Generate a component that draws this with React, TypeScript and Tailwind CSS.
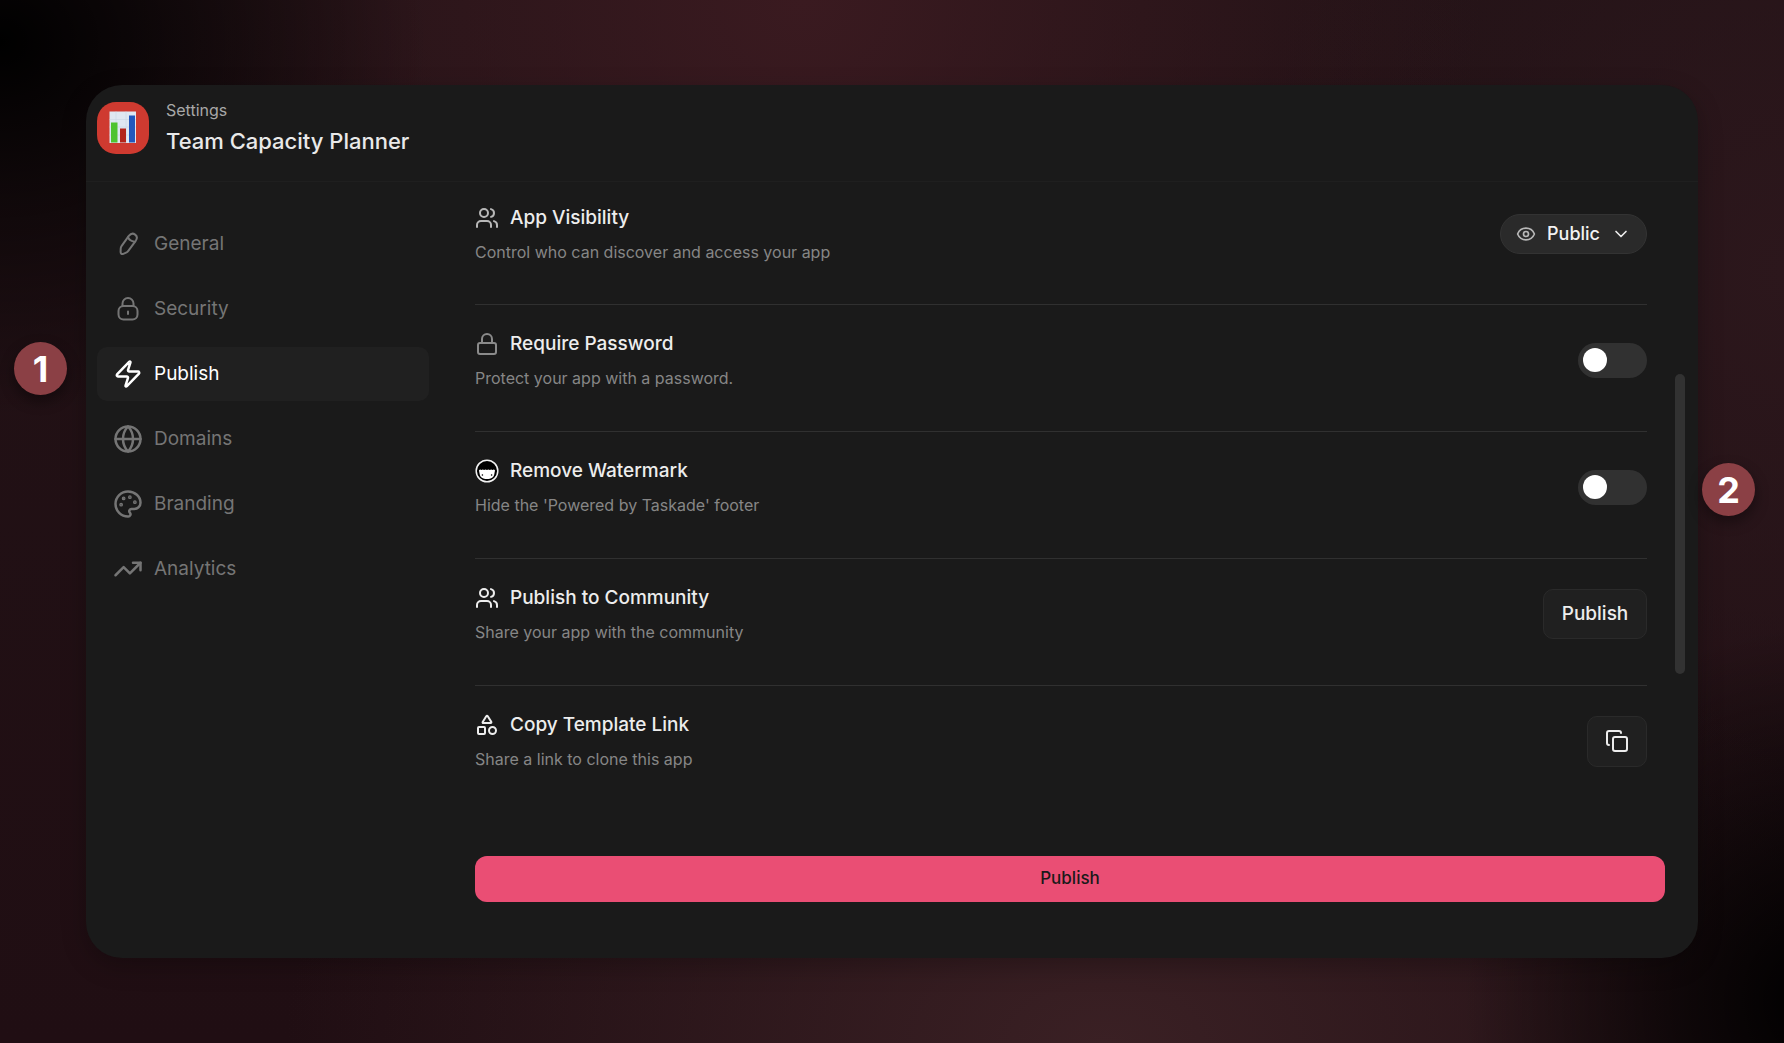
import { useState } from "react";
import type { ReactNode } from "react";
import { ChevronDown, Copy, Eye, Globe, Lock, Palette, Shapes, TrendingUp, Users, Zap } from "lucide-react";

function PencilIcon() {
  return (
    <svg viewBox="0 0 30 30" className="size-[30px]" fill="none" stroke="currentColor" strokeWidth="2" strokeLinecap="round" strokeLinejoin="round" aria-hidden="true">
      <path d="M15.800 6.900c1.900-2.300 4.400-2.700 6.300-1.300s2.200 3.900.6 6.200l-7.400 10.100c-.6.8-1.300 1.400-2.200 1.800l-2.800 1.200c-1.500.6-2.700-.2-2.700-1.800l.1-3.400c0-1.100.4-2 1-2.900z" />
      <path d="M15 8.200c1 2.600 3.300 4.200 6.600 4.500" />
    </svg>
  );
}

function RoundLockIcon() {
  return (
    <svg viewBox="0 0 30 30" className="size-[30px]" fill="none" stroke="currentColor" strokeWidth="2" strokeLinecap="round" strokeLinejoin="round" aria-hidden="true">
      <rect x="5.500" y="12" width="19" height="13.500" rx="5" />
      <path d="M9.500 12V9.500a5.500 5.500 0 0 1 11 0V12M15 17.500v2.500" />
    </svg>
  );
}

function FaceIcon() {
  return (
    <svg viewBox="0 0 24 24" className="size-6" aria-hidden="true">
      <circle cx="12" cy="12" r="10.800" fill="#000" stroke="#f2f2f2" strokeWidth="1.500" />
      <path d="M4 11.200c.8-.9 1.600-.9 2.400-.1.900-.9 1.800-.9 2.700 0 .9-.9 1.900-.9 2.900 0 .9-.9 1.900-.9 2.800 0 .9-.9 1.900-.9 2.800 0 .8-.8 1.600-.8 2.400.1-.1 1.200-.4 2-.6 3.500-.5 3.700-3.100 5.300-7.400 5.300s-6.900-1.600-7.400-5.300C4.400 13.200 4.100 12.400 4 11.200z" fill="#fff" />
      <circle cx="7.400" cy="16" r=".8" fill="#000" />
      <circle cx="16.600" cy="16" r=".8" fill="#000" />
    </svg>
  );
}

function AppLogo() {
  return (
    <svg viewBox="0 0 52 52" className="mt-1 size-[52px] shrink-0" aria-hidden="true">
      <rect width="52" height="52" rx="19" fill="#cf3a30" />
      <rect x="12.500" y="9.500" width="26.500" height="31.500" fill="#dfe7f1" />
      <path d="M12.500 17.500H39M12.500 25H39M12.500 33H39M19 9.500V41M29 9.500V41" stroke="#cbd6e4" strokeWidth=".6" />
      <rect x="14" y="20.500" width="6.500" height="20" fill="#4fc32f" />
      <rect x="23" y="26.500" width="6" height="14" fill="#b3241a" />
      <rect x="32" y="13.500" width="6" height="27" fill="#2258bd" />
    </svg>
  );
}

const navItems: { label: string; icon: ReactNode }[] = [
  { label: "General", icon: <PencilIcon /> },
  { label: "Security", icon: <RoundLockIcon /> },
  { label: "Publish", icon: <Zap size={30} /> },
  { label: "Domains", icon: <Globe size={30} /> },
  { label: "Branding", icon: <Palette size={30} /> },
  { label: "Analytics", icon: <TrendingUp size={30} /> },
];

function Row({ icon, title, text, first, last, children }: { icon: ReactNode; title: string; text: string; first?: boolean; last?: boolean; children: ReactNode }) {
  return (
    <section
      className={
        "mr-[18px] flex items-center justify-between " +
        (first ? "pt-[22px] " : "pt-[25px] ") +
        (last ? "" : first ? "border-b border-[#303030] pb-10" : "border-b border-[#303030] pb-[41px]")
      }
    >
      <div>
        <h2 className="flex h-7 items-center gap-[11px] text-[19px] leading-7 font-medium text-[#ededed]">
          {icon}
          {title}
        </h2>
        <p className="mt-2 text-base leading-6 text-[#868686]">{text}</p>
      </div>
      {children}
    </section>
  );
}

function Toggle({ label }: { label: string }) {
  const [on, setOn] = useState(false);
  return (
    <input
      type="checkbox"
      role="switch"
      aria-label={label}
      checked={on}
      onChange={() => setOn(!on)}
      className="h-[35px] w-[69px] cursor-pointer appearance-none rounded-full bg-[#313131] p-[5px] before:block before:size-6 before:rounded-full before:bg-white checked:bg-[#ea4e74] checked:before:ml-auto"
    />
  );
}

export default function App() {
  const [active, setActive] = useState("Publish");
  return (
    <div
      className="relative min-h-screen bg-[#200e13] bg-[radial-gradient(ellipse_24%_36%_at_0%_4%,#000_0%,#00000090_40%,#00000000_100%),radial-gradient(ellipse_20%_36%_at_102%_96%,#000_0%,#000000a0_40%,#00000000_100%),radial-gradient(ellipse_38%_60%_at_45%_0%,#3a1a20_0%,#3a1a2000_100%),radial-gradient(ellipse_46%_48%_at_62%_100%,#3a2024_0%,#3a202400_100%),radial-gradient(ellipse_30%_65%_at_100%_26%,#2c171c_0%,#2c171c00_100%),linear-gradient(#221216,#200e13)] px-[86px] py-[85px] font-['Inter','Liberation_Sans',sans-serif]"
    >
      <div className="rounded-[36px] bg-[#1a1a1a] shadow-[0_8px_24px_rgba(0,0,0,0.25)]">
        <header className="flex h-[97px] items-start gap-[17px] border-b border-[#1f1f1f] pt-[13px] pl-[11px]">
          <AppLogo />
          <div>
            <p className="text-base leading-6 text-[#a8a8a8]">Settings</p>
            <h1 className="mt-[3px] text-[22px] leading-8 font-medium text-[#e9e9e9]">Team Capacity Planner</h1>
          </div>
        </header>

        <div className="flex">
          <nav className="ml-[11px] flex w-[332px] shrink-0 flex-col gap-[11px] pt-[35px]">
            {navItems.map((item) => (
              <button
                key={item.label}
                type="button"
                onClick={() => setActive(item.label)}
                className={
                  "flex h-[54px] cursor-pointer items-center gap-[11px] rounded-[10px] pl-4 text-[19px] " +
                  (active === item.label ? "bg-[#202020] text-white" : "text-[#757575]")
                }
              >
                {item.icon}
                {item.label}
              </button>
            ))}
          </nav>

          <main className="relative ml-[46px] min-w-0 flex-1 pr-[33px] pb-14">
            <Row first icon={<Users size={24} strokeWidth={2} className="text-[#b8b8b8]" />} title="App Visibility" text="Control who can discover and access your app">
              <div className="relative flex items-center">
                <Eye size={20} className="pointer-events-none absolute left-4 text-[#b8b8b8]" />
                <select aria-label="App visibility" className="h-10 w-[147px] cursor-pointer appearance-none rounded-full border border-[#333] bg-[#2a2a2a] pl-[46px] text-lg font-medium text-[#f2f2f2]">
                  <option>Public</option>
                  <option>Private</option>
                </select>
                <ChevronDown size={20} className="pointer-events-none absolute right-4 text-[#ededed]" />
              </div>
            </Row>
            <Row icon={<Lock size={24} strokeWidth={2} className="text-[#8a8a8a]" />} title="Require Password" text="Protect your app with a password.">
              <Toggle label="Require Password" />
            </Row>
            <Row icon={<FaceIcon />} title="Remove Watermark" text="Hide the 'Powered by Taskade' footer">
              <Toggle label="Remove Watermark" />
            </Row>
            <Row icon={<Users size={24} strokeWidth={2} />} title="Publish to Community" text="Share your app with the community">
              <button type="button" className="h-[50px] w-[104px] cursor-pointer rounded-[10px] border border-[#2a2a2a] bg-[#202020] text-[19px] font-medium text-[#ededed]">
                Publish
              </button>
            </Row>
            <Row last icon={<Shapes size={24} />} title="Copy Template Link" text="Share a link to clone this app">
              <button type="button" aria-label="Copy template link" className="flex h-[51px] w-[60px] cursor-pointer items-center justify-center rounded-[10px] border border-[#2a2a2a] bg-[#202020] text-[#ededed]">
                <Copy size={24} />
              </button>
            </Row>
            <button type="button" className="mt-[85px] h-[46px] w-full cursor-pointer rounded-xl bg-[#ea4e74] text-[17px] font-medium text-[#1a1a1a]">
              Publish
            </button>
            <div className="absolute top-[192px] right-[13px] h-[300px] w-[10px] rounded-full bg-[#323232]" />
          </main>
        </div>
      </div>

      <span className="absolute top-[342px] left-[14px] flex size-[53px] items-center justify-center rounded-full bg-[#8b4045] text-4xl font-bold text-white shadow-[0_6px_14px_rgba(0,0,0,0.4)]">1</span>
      <span className="absolute top-[463px] right-[29px] flex size-[53px] items-center justify-center rounded-full bg-[#8b4045] text-4xl font-bold text-white shadow-[0_6px_14px_rgba(0,0,0,0.4)]">2</span>
    </div>
  );
}
